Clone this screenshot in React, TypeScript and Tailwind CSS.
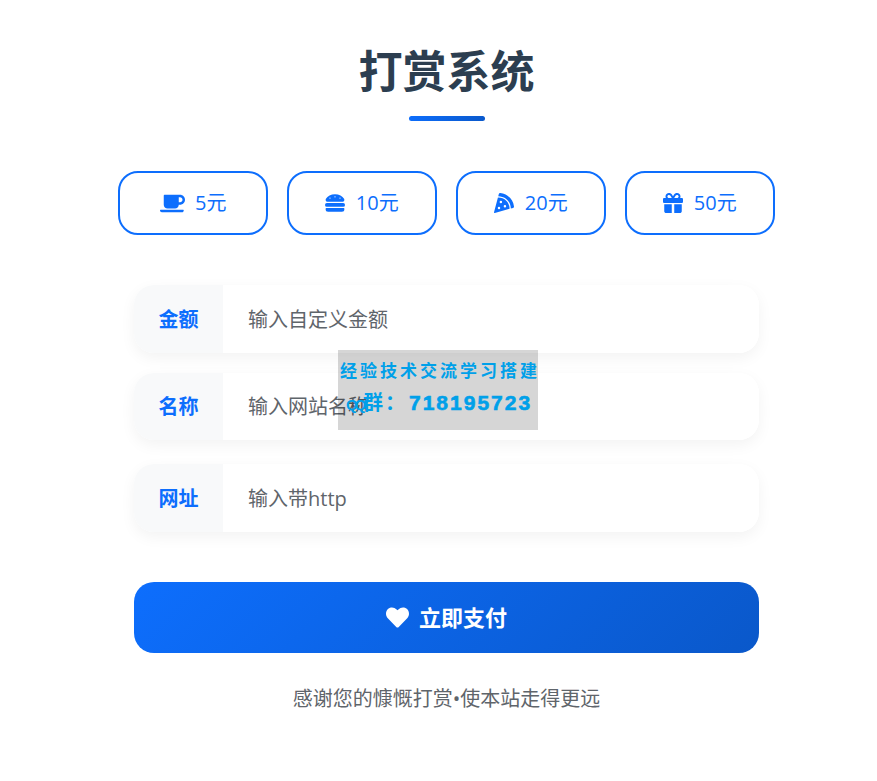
import React from 'react';
import { FaCoffee, FaHamburger, FaHeart, FaPizzaSlice } from 'react-icons/fa';
import { FaGift } from 'react-icons/fa6';

const font = "font-['Open_Sans','Noto_Sans_CJK_SC',sans-serif]";

const amounts = [
  { icon: FaCoffee, label: '5元', iconSize: 25 },
  { icon: FaHamburger, label: '10元', iconSize: 20 },
  { icon: FaPizzaSlice, label: '20元', iconSize: 20 },
  { icon: FaGift, label: '50元', iconSize: 20 },
];

const fields = [
  { label: '金额', placeholder: '输入自定义金额', margin: 'mt-0', pad: 'pt-[2px]' },
  { label: '名称', placeholder: '输入网站名称', margin: 'mt-[20px]', pad: 'pt-[2px]' },
  { label: '网址', placeholder: '输入带http', margin: 'mt-[24px]', pad: 'pt-[3px]' },
];

const App: React.FC = () => {
  return (
    <div className={`relative w-[877px] h-[781px] bg-white overflow-hidden ${font}`}>
      <div className="w-[657px] ml-[118px] pt-[43px] flex flex-col items-center">
        <h1 className="text-[44px] leading-[56px] font-bold text-[#2c3e50]">打赏系统</h1>
        <div className="w-[76px] h-[5px] mt-[17px] rounded-full bg-[linear-gradient(135deg,#0d6efd,#0a58ca)]"></div>

        <div className="w-full mt-[50px] grid grid-cols-4 gap-[19px]">
          {amounts.map(({ icon: Icon, label, iconSize }) => (
            <button
              key={label}
              className="h-[64px] rounded-[20px] border-2 border-[#0d6efd] bg-white text-[#0d6efd] text-[20px] flex items-center justify-center gap-[10.5px]"
            >
              <Icon size={iconSize} />
              <span>{label}</span>
            </button>
          ))}
        </div>

        <div className="w-[625px] mt-[50px]">
          {fields.map(f => (
            <div
              key={f.label}
              className={`${f.margin} h-[67.5px] flex rounded-[20px] overflow-hidden bg-white shadow-[0_5px_15px_rgba(0,0,0,0.05)]`}
            >
              <div className={`${f.pad} w-[89px] bg-[#f8f9fa] flex items-center justify-center text-[#0d6efd] text-[20px] font-bold`}>
                {f.label}
              </div>
              <input
                placeholder={f.placeholder}
                className={`${f.pad} flex-1 pl-[25px] text-[20px] outline-none bg-white placeholder:text-[#5f656b]`}
              />
            </div>
          ))}
        </div>

        <button className="w-[625px] h-[71px] mt-[50.5px] rounded-[20px] bg-[linear-gradient(135deg,#0d6efd,#0a58ca)] text-white text-[22px] font-bold flex items-center justify-center gap-[10px]">
          <FaHeart size={23} />
          <span>立即支付</span>
        </button>

        <p className="mt-[31px] text-[20px] leading-[30px] text-[#5f656b]">感谢您的慷慨打赏•使本站走得更远</p>
      </div>

      {/* watermark sits over the form, the input text shows through it */}
      <div className="absolute left-[338px] top-[350px] w-[200px] h-[80px] bg-black/16 text-[#00a0e9] font-bold">
        <div className="mt-[10px] ml-[2px] whitespace-nowrap text-[17px] leading-[24px] tracking-[3px] font-['Liberation_Serif','Noto_Sans_CJK_SC',serif]">
          经验技术交流学习搭建
        </div>
        <div className="mt-[6px] ml-[8px] flex items-baseline whitespace-nowrap leading-[26px] font-['Liberation_Sans','Noto_Sans_CJK_SC',sans-serif]">
          <span className="w-[17px] text-[15px] tracking-[-3px]">QQ</span>
          <span className="w-[22px] text-[20px]">群</span>
          <span className="w-[24px] text-[20px]">：</span>
          <span className="text-[21px] tracking-[2px] [-webkit-text-stroke:0.6px_#00a0e9]">718195723</span>
        </div>
      </div>
    </div>
  );
};

export default App;
